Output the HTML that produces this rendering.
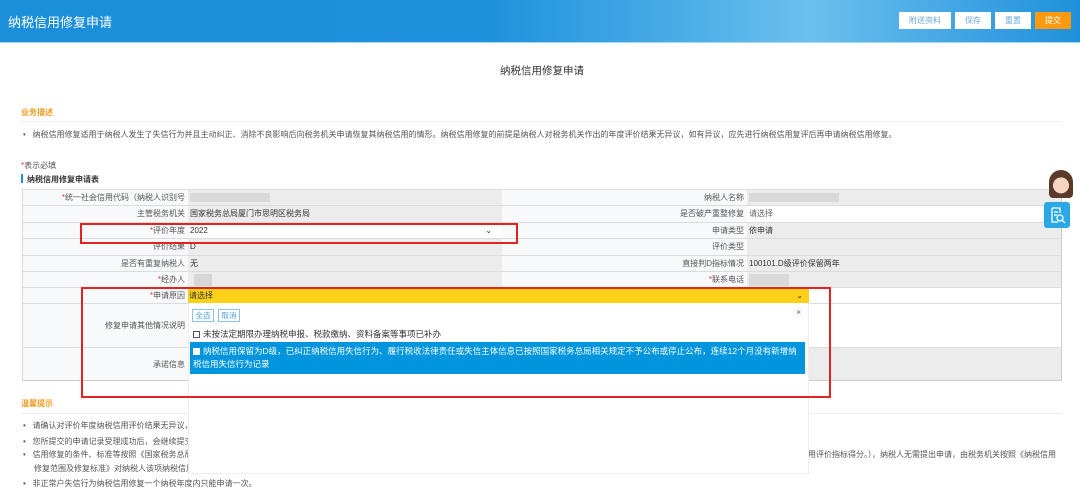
<!DOCTYPE html>
<html><head><meta charset="utf-8"><style>
*{margin:0;padding:0;box-sizing:border-box}
body{width:1080px;height:503px;overflow:hidden;background:#fff;font-family:"Liberation Sans","Noto Sans CJK SC",sans-serif;font-size:8px;color:#555;position:relative}
.a{position:absolute;white-space:nowrap}
.hdr{left:0;top:0;width:1080px;height:43px;background:linear-gradient(90deg,#1c8fdb 0%,#1e91dc 45%,#4fb0e8 65%,#6cc0ee 75%,#3ea3e3 90%,#1f90da 100%);border-bottom:1px solid #a9d6f2}
.btn{top:12px;height:17px;background:#fff;color:#6aa9d8;font-size:8px;line-height:17px;text-align:center}
.row{position:absolute;left:22px;width:1040px;border-bottom:1px solid #dcdcdc}
.c{position:absolute;top:0;height:100%;line-height:15px}
.lab{text-align:right;padding-right:3px;background:#f7f9fb;color:#555}
.val{background:#edecec;padding-left:2px;color:#333}
.r{color:#e33}
</style></head><body>
<div class="a hdr"></div>
<div class="a" style="left:8px;top:12px;font-size:13px;color:#fff">纳税信用修复申请</div>
<div class="a btn" style="left:899px;width:52px">附送资料</div>
<div class="a btn" style="left:955px;width:36px">保存</div>
<div class="a btn" style="left:995px;width:36px">重置</div>
<div class="a btn" style="left:1035px;width:36px;background:#fb9a0e;color:#fff">提交</div>

<div class="a" style="left:500px;top:63px;font-size:10.5px;color:#333">纳税信用修复申请</div>
<div class="a" style="left:21px;top:107px;color:#f39a1f;font-weight:bold">业务描述</div>
<div class="a" style="left:21px;top:121px;width:1041px;height:1px;background:#eee"></div>
<div class="a" style="left:23px;top:129px">•&nbsp;&nbsp;&nbsp;纳税信用修复适用于纳税人发生了失信行为并且主动纠正、消除不良影响后向税务机关申请恢复其纳税信用的情形。纳税信用修复的前提是纳税人对税务机关作出的年度评价结果无异议，如有异议，应先进行纳税信用复评后再申请纳税信用修复。</div>
<div class="a" style="left:21px;top:160px"><span class="r">*</span>表示必填</div>
<div class="a" style="left:21px;top:174px;width:2px;height:9px;background:#1e91dc"></div>
<div class="a" style="left:27px;top:174px;color:#333;font-weight:bold">纳税信用修复申请表</div>

<div class="a" style="left:22px;top:189px;width:1040px;height:1px;background:#dcdcdc"></div>
<div class="row" style="top:190px;height:16px"><div class="c lab" style="left:0;width:166px"><span class="r">*</span>统一社会信用代码（纳税人识别号</div><div class="c val" style="left:166px;width:314px"><span style="display:inline-block;width:80px;height:9px;background:#d9d9d9;vertical-align:middle"></span></div><div class="c lab" style="left:480px;width:245px">纳税人名称</div><div class="c val" style="left:725px;width:315px"><span style="display:inline-block;width:90px;height:9px;background:#d9d9d9;vertical-align:middle"></span></div></div>
<div class="row" style="top:206px;height:17px"><div class="c lab" style="left:0;width:166px">主管税务机关</div><div class="c val" style="left:166px;width:314px">国家税务总局厦门市思明区税务局</div><div class="c lab" style="left:480px;width:245px">是否破产重整修复</div><div class="c val" style="left:725px;width:315px;background:#fff;color:#666">请选择</div></div>
<div class="row" style="top:223px;height:16px"><div class="c lab" style="left:0;width:166px"><span class="r">*</span>评价年度</div><div class="c val" style="left:166px;width:314px;background:#fff">2022<span style="position:absolute;right:10px;top:0">⌄</span></div><div class="c lab" style="left:480px;width:245px">申请类型</div><div class="c val" style="left:725px;width:315px">依申请</div></div>
<div class="row" style="top:239px;height:17px"><div class="c lab" style="left:0;width:166px">评价结果</div><div class="c val" style="left:166px;width:314px">D</div><div class="c lab" style="left:480px;width:245px">评价类型</div><div class="c val" style="left:725px;width:315px"></div></div>
<div class="row" style="top:256px;height:16px"><div class="c lab" style="left:0;width:166px">是否有重复纳税人</div><div class="c val" style="left:166px;width:314px">无</div><div class="c lab" style="left:480px;width:245px">直接判D指标情况</div><div class="c val" style="left:725px;width:315px">100101.D级评价保留两年</div></div>
<div class="row" style="top:272px;height:16px"><div class="c lab" style="left:0;width:166px"><span class="r">*</span>经办人</div><div class="c val" style="left:166px;width:314px"><span style="display:inline-block;width:18px;height:12px;background:#d6d6d6;vertical-align:middle;margin-left:4px"></span></div><div class="c lab" style="left:480px;width:245px"><span class="r">*</span>联系电话</div><div class="c val" style="left:725px;width:315px"><span style="display:inline-block;width:40px;height:12px;background:#d9d9d9;vertical-align:middle"></span></div></div>
<div class="row" style="top:288px;height:16px"><div class="c lab" style="left:0;width:166px"><span class="r">*</span>申请原因</div><div class="c" style="left:166px;width:874px;background:#fff"></div></div>
<div class="row" style="top:304px;height:44px"><div class="c lab" style="left:0;width:166px;line-height:44px">修复申请其他情况说明</div><div class="c" style="left:166px;width:874px;background:#fff"></div></div>
<div class="row" style="top:348px;height:33px;border-bottom:1px solid #ccc"><div class="c lab" style="left:0;width:166px;line-height:33px">承诺信息</div><div class="c val" style="left:166px;width:874px"></div></div>
<div class="a" style="left:22px;top:190px;width:1px;height:191px;background:#dcdcdc"></div>
<div class="a" style="left:1061px;top:190px;width:1px;height:191px;background:#ccc"></div>

<div class="a" style="left:21px;top:398px;font-weight:bold;color:#f39a1f">温馨提示</div>
<div class="a" style="left:21px;top:413px;width:1041px;height:1px;background:#eee"></div>
<div class="a" style="left:23px;top:420px">•&nbsp;&nbsp;&nbsp;请确认对评价年度纳税信用评价结果无异议，如有异议，应先进行纳税信用复评后再申请纳税信用修复。</div>
<div class="a" style="left:23px;top:436px">•&nbsp;&nbsp;&nbsp;您所提交的申请记录受理成功后，会继续提交至税务机关审核，请耐心等待审核结果。</div>
<div class="a" style="left:23px;top:449px">•&nbsp;&nbsp;&nbsp;信用修复的条件、标准等按照《国家税务总局关于纳税信用修复有关事项的公告》执行</div>
<div class="a" style="left:808px;top:449px">用评价指标得分。），纳税人无需提出申请，由税务机关按照《纳税信用</div>
<div class="a" style="left:34px;top:463px">修复范围及修复标准》对纳税人该项纳税信用评价指标得分进行调整。</div>
<div class="a" style="left:23px;top:478px">•&nbsp;&nbsp;&nbsp;非正常户失信行为纳税信用修复一个纳税年度内只能申请一次。</div>

<div class="a" style="left:188px;top:289px;width:621px;height:14px;background:#fdd118;color:#333;line-height:14px;padding-left:1px">请选择<span style="position:absolute;right:6px;top:0">⌄</span></div>
<div class="a" style="left:188px;top:303px;width:621px;height:171px;background:#fff;border:1px solid #eee;border-top:none"></div>
<div class="a" style="left:192px;top:309px;width:22px;height:13px;border:1px solid #8ec3e8;color:#4a9fd8;text-align:center;line-height:11px;font-size:7.5px">全选</div>
<div class="a" style="left:218px;top:309px;width:22px;height:13px;border:1px solid #8ec3e8;color:#4a9fd8;text-align:center;line-height:11px;font-size:7.5px">取消</div>
<div class="a" style="left:796px;top:307px;color:#666;font-size:9px">×</div>
<div class="a" style="left:193px;top:328px;color:#333;font-size:8.5px"><span style="display:inline-block;width:7px;height:7px;border:1px solid #555;vertical-align:middle;margin-right:3px"></span>未按法定期限办理纳税申报、税款缴纳、资料备案等事项已补办</div>
<div class="a" style="left:190px;top:342px;width:615px;height:32px;background:#0095dc;color:#fff;line-height:13px;padding:3px 8px 0 3px;font-size:8.5px;white-space:normal;overflow:hidden"><span style="display:inline-block;width:7px;height:7px;background:#fff;vertical-align:middle;margin-right:3px"></span>纳税信用保留为D级，已纠正纳税信用失信行为、履行税收法律责任或失信主体信息已按照国家税务总局相关规定不予公布或停止公布，连续12个月没有新增纳税信用失信行为记录</div>

<div class="a" style="left:80px;top:223px;width:438px;height:21px;border:2px solid #e52222"></div>
<div class="a" style="left:81px;top:287px;width:750px;height:111px;border:2px solid #e52222"></div>

<div class="a" style="left:1049px;top:170px;width:24px;height:28px;border-radius:12px 12px 4px 4px;background:radial-gradient(circle at 50% 55%,#f6d6c2 0 40%,#5a3a28 42%);"></div>
<div class="a" style="left:1044px;top:202px;width:26px;height:26px;background:#2aa8e6;border-radius:3px"><svg width="26" height="26" viewBox="0 0 26 26"><path d="M8 6h8v5M8 6v14h6M10 10h4M10 13h3" stroke="#fff" stroke-width="1.3" fill="none"/><circle cx="16" cy="16" r="3" stroke="#fff" stroke-width="1.3" fill="none"/><path d="M18 18l3 3" stroke="#fff" stroke-width="1.3"/></svg></div>
</body></html>
